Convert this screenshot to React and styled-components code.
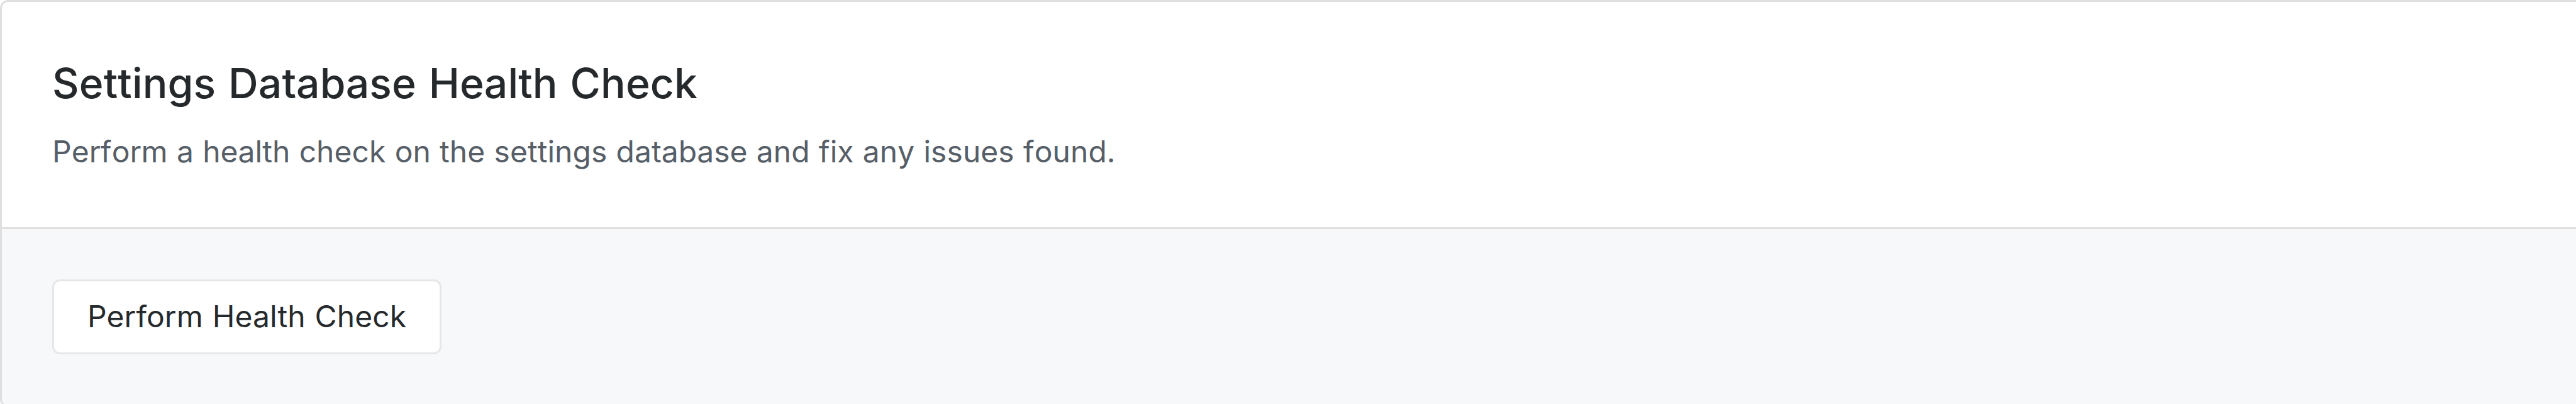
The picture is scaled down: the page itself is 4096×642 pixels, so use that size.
import React from "react";
import styled, { createGlobalStyle } from "styled-components";

const GlobalStyle = createGlobalStyle`
  *,
  *::before,
  *::after {
    box-sizing: border-box;
  }
  body {
    margin: 0;
    background: #ffffff;
    font-family: Inter, "Liberation Sans", sans-serif;
    font-kerning: none;
    overflow: hidden;
  }
`;

const Card = styled.section`
  width: calc(100vw + 20px);
  height: 647px;
  display: flex;
  flex-direction: column;
  border: 3px solid #dfdfdf;
  border-radius: 13px;
  background: #ffffff;
  overflow: hidden;
`;

const CardHeader = styled.header`
  height: 361px;
  padding: 85px 80px 0;
  border-bottom: 3px solid #dfdfdf;
`;

const Title = styled.h2`
  margin: 0;
  font-size: 66px;
  line-height: 88px;
  font-weight: 500;
  letter-spacing: 0.15px;
  word-spacing: 2px;
  color: #25292b;
`;

const Description = styled.p`
  margin: 36px 0 0;
  font-size: 48px;
  line-height: 58px;
  font-weight: 400;
  letter-spacing: 0.04px;
  word-spacing: 0.7px;
  color: #565e67;
`;

const CardFooter = styled.footer`
  flex: 1;
  padding: 80px;
  background: #f6f8fa;
`;

const ActionButton = styled.button`
  display: flex;
  align-items: center;
  width: 619px;
  height: 119px;
  padding: 0 0 2px 53px;
  border: 3px solid #e5e7e8;
  border-radius: 12px;
  background: #ffffff;
  font-family: inherit;
  font-size: 48px;
  line-height: 58px;
  font-weight: 400;
  letter-spacing: 0.1px;
  word-spacing: 1.2px;
  color: #25292b;
  white-space: nowrap;
`;

export default function App() {
  return (
    <>
      <GlobalStyle />
      <Card>
        <CardHeader>
          <Title>Settings Database Health Check</Title>
          <Description>
            Perform a health check on the settings database and fix any issues found.
          </Description>
        </CardHeader>
        <CardFooter>
          <ActionButton type="button">Perform Health Check</ActionButton>
        </CardFooter>
      </Card>
    </>
  );
}
